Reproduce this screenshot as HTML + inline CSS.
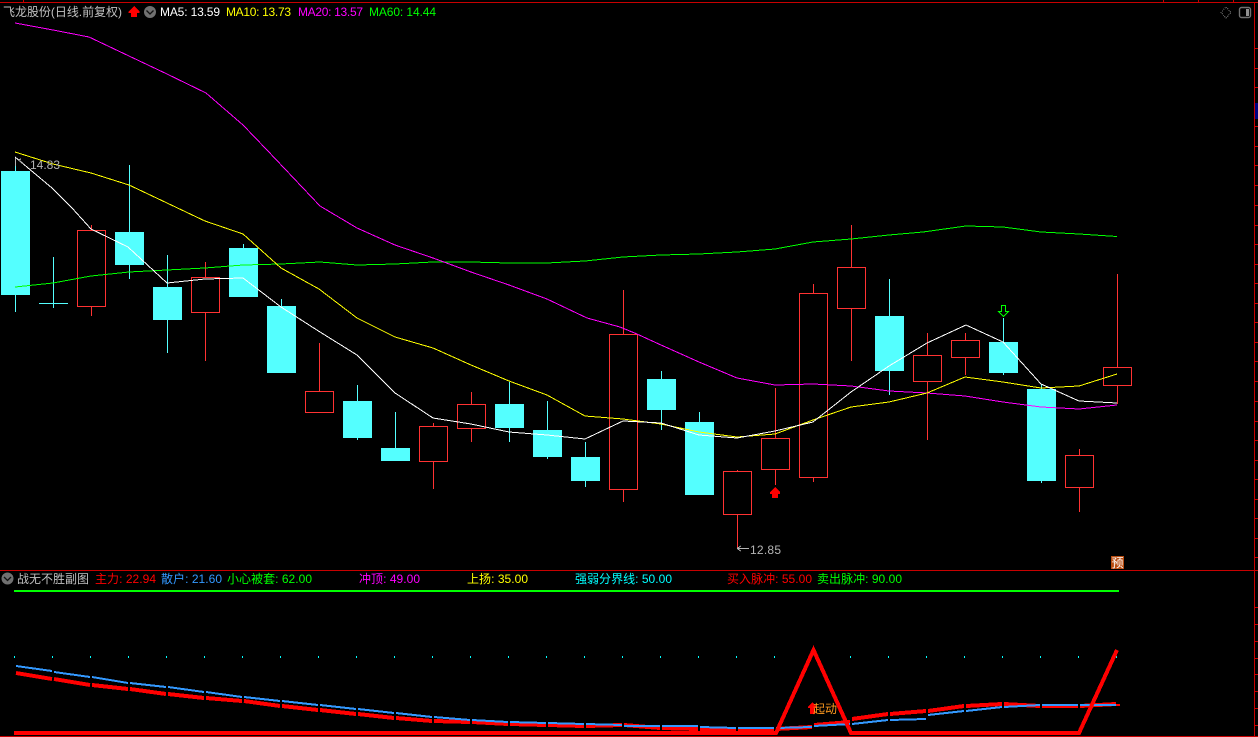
<!DOCTYPE html>
<html><head><meta charset="utf-8"><title>飞龙股份</title>
<style>
html,body{margin:0;padding:0;background:#000;width:1258px;height:737px;overflow:hidden}
svg{display:block}
text{font-family:"Liberation Sans","WenQuanYi Zen Hei","Noto Sans CJK SC",sans-serif;font-size:12px}
</style></head><body>
<svg width="1258" height="737" viewBox="0 0 1258 737" xmlns="http://www.w3.org/2000/svg">
<rect width="1258" height="737" fill="#000"/>
<g shape-rendering="crispEdges">
<!-- frame -->
<path fill="none" stroke="#c80000" stroke-width="1" d="M0 2.5H1258M1254.5 2V737M0 570.5H1258M0 736.5H1258M23.5 0V2M1163.5 0V2M1198.5 0V2M1233.5 0V2M1254 48.5h4M1254 68.5h4M1254 87.5h4M1254 126.5h4M1254 146.5h4M1254 165.5h4M1254 185.5h4M1254 205.5h4M1254 225.5h4M1254 244.5h4M1254 264.5h4M1254 283.5h4M1254 303.5h4M1254 322.5h4M1254 342.5h4M1254 361.5h4M1254 381.5h4M1254 401.5h4M1254 421.5h4M1254 440.5h4M1254 460.5h4M1254 479.5h4M1254 499.5h4M1254 518.5h4M1254 538.5h4M1254 557.5h4M1254 607.5h4M1254 624.5h4M1254 641.5h4M1254 658.5h4M1254 674.5h4M1254 691.5h4M1254 708.5h4M1254 725.5h4"/>
<rect x="1255" y="103" width="3" height="16" fill="#000080"/>
<!-- cyan wicks -->
<path fill="none" stroke="#54ffff" d="M15.5 158V312M53.5 257V308M39 303.5H68M129.5 165V279M167.5 255V353M243.5 244V297M281.5 299V373M357.5 385V440M395.5 412V461M509.5 382V442M547.5 401V459M585.5 442V487M661.5 371V430M699.5 412V495M889.5 279V395M1003.5 318V375M1041.5 384V483"/>
<!-- red wicks -->
<path fill="none" stroke="#ff3232" d="M91.5 225V316M205.5 262V361M319.5 343V391M433.5 423V489M471.5 392V442M623.5 290V502M737.5 470V548M775.5 388V485M813.5 284V482M851.5 225V361M927.5 333V440M965.5 333V375M1079.5 449V512M1117.5 274V404"/>
<!-- red bodies -->
<g fill="#000" stroke="#ff3232">
<rect x="77.5" y="230.5" width="28" height="76"/>
<rect x="191.5" y="277.5" width="28" height="35"/>
<rect x="305.5" y="391.5" width="28" height="21"/>
<rect x="419.5" y="426.5" width="28" height="35"/>
<rect x="457.5" y="404.5" width="28" height="24"/>
<rect x="609.5" y="334.5" width="28" height="155"/>
<rect x="723.5" y="471.5" width="28" height="43"/>
<rect x="761.5" y="438.5" width="28" height="31"/>
<rect x="799.5" y="293.5" width="28" height="184"/>
<rect x="837.5" y="267.5" width="28" height="41"/>
<rect x="913.5" y="355.5" width="28" height="26"/>
<rect x="951.5" y="340.5" width="28" height="17"/>
<rect x="1065.5" y="455.5" width="28" height="32"/>
<rect x="1103.5" y="367.5" width="28" height="18"/>
</g>
<!-- cyan bodies -->
<g fill="#54ffff">
<rect x="1" y="171" width="29" height="124"/>
<rect x="115" y="232" width="29" height="33"/>
<rect x="153" y="287" width="29" height="33"/>
<rect x="229" y="248" width="29" height="49"/>
<rect x="267" y="306" width="29" height="67"/>
<rect x="343" y="401" width="29" height="37"/>
<rect x="381" y="448" width="29" height="13"/>
<rect x="495" y="404" width="29" height="24"/>
<rect x="533" y="430" width="29" height="27"/>
<rect x="571" y="457" width="29" height="24"/>
<rect x="647" y="379" width="29" height="31"/>
<rect x="685" y="422" width="29" height="73"/>
<rect x="875" y="316" width="29" height="55"/>
<rect x="989" y="342" width="29" height="31"/>
<rect x="1027" y="389" width="29" height="92"/>
</g>
<!-- MA lines -->
<path fill="none" stroke="#00ff00" d="M15 287L53 283L91 276L129 272L167 270L205 268L243 265L281 264L320 262L357 265L395 264L433 262L471 262L509 263L547 263L585 261L623 257L661 255L699 254L737 252L775 249L813 242L851 239L889 235L923 232L966 226L1003 227L1041 232L1079 234L1117 236.5"/>
<path fill="none" stroke="#ff00ff" d="M15 23L53 30L89 37L129 56L167 74L206 93L243 125L267 150L320 206L357 228L395 245L433 258L471 272L509 285L547 299L587 318L620 327L637 334L661 345L699 362L737 378L775 385L813 384L851 386L889 391L927 393L965 396L1003 402L1041 407L1079 409L1117 405"/>
<path fill="none" stroke="#ffff00" d="M15 152L53 164L91 173L129 185L167 203L205 221L243 234L281 268L319 289L357 318L395 337L433 348L471 365L509 381L547 395L585 416L623 419L661 424L699 432L737 437L775 434L813 420L851 407L889 402L927 393L965 377L1003 382L1041 388L1079 386L1117 374"/>
<path fill="none" stroke="#ffffff" d="M15 157L52 188L72 208L91 229L128 247L167 283L205 279L243 278L281 307L320 332L357 355L395 393L433 418L471 424L509 432L547 435L585 439L623 421L661 423L699 435L737 438L775 431L813 422L851 392L889 366L927 343L966 325L1003 342L1041 384L1079 401L1117 403"/>
<!-- sub chart -->
<rect x="14" y="590" width="1105" height="2" fill="#00ff00"/>
<path stroke="#00ffff" stroke-width="1" d="M14.5 656v2M52.5 656v2M90.5 656v2M128.5 656v2M166.5 656v2M204.5 656v2M242.5 656v2M280.5 656v2M318.5 656v2M356.5 656v2M394.5 656v2M432.5 656v2M470.5 656v2M508.5 656v2M546.5 656v2M584.5 656v2M622.5 656v2M660.5 656v2M698.5 656v2M736.5 656v2M774.5 656v2M850.5 656v2M888.5 656v2M926.5 656v2M964.5 656v2M1002.5 656v2M1040.5 656v2M1078.5 656v2M1116.5 656v2"/>
<!-- 主力 red -->
<path fill="none" stroke="#ff0000" stroke-width="4" d="M16 673L52 679M54 679L90 685M92 685L128 689M130 689L166 694M168 694L204 698M206 698L242 701M244 701L280 706M282 706L318 710M320 710L356 714M358 714L394 718M396 718L432 721M434 721L470 722M472 722L508 724M510 724L546 725M548 725L584 726M586 726L622 725M624 725L660 728M662 728L698 729M700 729L736 729M738 729L774 729M776 729L812 727M814 725L850 722M852 719L888 714M890 714L926 711M928 711L964 706M966 706L1002 704M1004 704L1040 706M1042 706L1078 706M1080 706L1116 704M1118 704V706"/>
<!-- 散户 blue -->
<path fill="none" stroke="#3399ff" stroke-width="2" d="M16 666L52 671M54 672L90 677M92 677L128 683M130 683L166 687M168 687L204 692M206 692L242 697M244 697L280 701M282 701L318 705M320 705L356 709M358 709L394 713M396 713L432 717M434 717L470 720M472 720L508 722M510 722L546 723M548 723L584 724M586 724L622 725M624 726L660 726M662 726L698 726M700 727L736 728M738 728L774 728M776 728L812 727M814 726L850 724M852 724L888 720M890 720L926 719M928 715L964 711M966 711L1002 707M1004 707L1040 705M1042 705L1078 705M1080 705L1116 705"/>
<!-- pulse -->
<path fill="none" stroke="#ff0000" stroke-width="4" stroke-linejoin="miter" d="M14 733H776L813.5 650L851 733H1079L1117 650"/>
<!-- arrows -->
<path fill="#ff0000" d="M775 487L780 492V494H778V498H772V494H770V492Z"/>
<path fill="#ff0000" d="M134 6L139.500 11.500V13H137V17H131V13H128.500V11.500Z"/>
<path fill="#ff0000" d="M812.500 702L817 707V708H815V714H810V708H808V707Z"/>
<path fill="#000" stroke="#00ff00" d="M1001.500 305.500H1005.500V311.500H1008.500L1003.500 316.500L998.500 311.500H1001.500Z"/>
<!-- badge -->
<rect x="1111" y="556" width="13" height="13" fill="#b84c10"/>
</g>
<!-- small arrows of price labels -->
<g shape-rendering="crispEdges" fill="none" stroke="#b4b4b4">
<path d="M737 548.500H749M737 548.500L741 546M737 548.500L741 551"/>
<path d="M15.500 158V166M18 160L23 163M18 160L21 159"/>
</g>
<!-- toolbar icons -->
<circle cx="150" cy="12" r="6" fill="#707070"/>
<path d="M146.500 10.500L150 14L153.500 10.500" fill="none" stroke="#111" stroke-width="1.300"/>
<circle cx="7.500" cy="578.500" r="6" fill="#707070"/>
<path d="M4 577L7.500 580.500L11 577" fill="none" stroke="#111" stroke-width="1.300"/>
<path d="M1226 7L1231 12.500L1226 18L1221 12.500Z" fill="none" stroke="#707070" stroke-dasharray="1 1" shape-rendering="crispEdges"/>
<rect x="1239.500" y="7.500" width="11" height="10" rx="2" fill="none" stroke="#707070" stroke-width="1.400"/>
<rect x="1246" y="9" width="3" height="7" fill="#909090"/>
<!-- text -->
<text x="3" y="16" fill="#c0c0c0" textLength="119">飞龙股份(日线.前复权)</text>
<text x="160" y="16" fill="#ffffff" textLength="60">MA5: 13.59</text>
<text x="226" y="16" fill="#ffff00" textLength="65">MA10: 13.73</text>
<text x="298" y="16" fill="#ff00ff" textLength="65">MA20: 13.57</text>
<text x="369" y="16" fill="#00ff00" textLength="67">MA60: 14.44</text>
<text x="30" y="169" fill="#b4b4b4" textLength="30">14.83</text>
<text x="750" y="554" fill="#b4b4b4" textLength="31">12.85</text>
<text x="1111.500" y="567" fill="#ffffff" textLength="12">预</text>
<text x="17" y="583" fill="#c0c0c0" textLength="72">战无不胜副图</text>
<text x="95" y="583" fill="#ff0000" textLength="61">主力: 22.94</text>
<text x="161" y="583" fill="#3399ff" textLength="61">散户: 21.60</text>
<text x="227" y="583" fill="#00ff00" textLength="85">小心被套: 62.00</text>
<text x="359" y="583" fill="#ff00ff" textLength="61">冲顶: 49.00</text>
<text x="467" y="583" fill="#ffff00" textLength="61">上扬: 35.00</text>
<text x="575" y="583" fill="#00ffff" textLength="97">强弱分界线: 50.00</text>
<text x="727" y="583" fill="#ff0000" textLength="85">买入脉冲: 55.00</text>
<text x="817" y="583" fill="#00ff00" textLength="85">卖出脉冲: 90.00</text>
<text x="813" y="713" fill="#ff9a1f" textLength="24">起动</text>
</svg>
</body></html>
